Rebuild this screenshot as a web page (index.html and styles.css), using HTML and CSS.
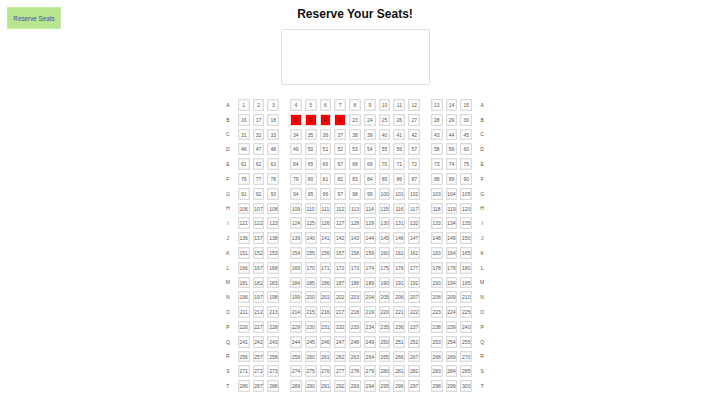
FILE: index.html
```html
<!DOCTYPE html>
<html lang="en">
<head>
    <meta charset="UTF-8">
    <title>Reserve Your Seats</title>
    <link rel="stylesheet" href="styles.css">
</head>
<body>
    <button class="reserve-btn">Reserve Seats</button>
    <div class="page">
        <h2>Reserve Your Seats!</h2>
        <div class="screen"></div>
        <div class="seats" id="seats"></div>
    </div>
    <script src="seats.js"></script>
</body>
</html>
```
FILE: styles.css
```css
body {
    font-family: "Liberation Sans", Arial, sans-serif;
    margin: 0;
    height: 400px;
    overflow: hidden;
    background-color: #ffffff;
    color: #333;
}
.reserve-btn {
    position: absolute;
    top: 7px;
    left: 7px;
    width: 54px;
    height: 22px;
    padding: 0;
    background-color: #b8e68e;
    border: 1px solid #c6eca4;
    color: #3a4fb0;
    font-family: inherit;
    font-size: 6.3px;
    font-weight: normal;
}
.page {
    display: flex;
    flex-direction: column;
    align-items: center;
}
h2 {
    margin: 7px 0 7px;
    font-size: 12px;
    line-height: 15px;
    color: #111;
}
.screen {
    box-sizing: border-box;
    width: 149px;
    height: 56px;
    border: 1px solid #e0e0e0;
    border-radius: 2px;
    margin-bottom: 14px;
}
.seats {
    display: flex;
    flex-direction: column;
    gap: 3px;
}
.row {
    display: flex;
    align-items: center;
    height: 11.8px;
    gap: 3px;
}
.row-label {
    width: 14px;
    font-size: 5px;
    text-align: center;
    color: #555;
}
.seat {
    box-sizing: border-box;
    width: 11.8px;
    height: 11.8px;
    border: 1px solid #dcdcdc;
    box-shadow: inset 0 0 0 1px #f2f2f2;
    font-size: 5px;
    line-height: 10px;
    text-align: center;
    color: #555;
}
.seat.reserved {
    background-color: #ff0000;
    box-shadow: none;
    color: #700;
}
.aisle {
    width: 4.7px;
}
```
FILE: seats.js
```js
let rows = 'ABCDEFGHIJKLMNOPQRST'.split('');
let reserved = [19, 20, 21, 22];
let seats = document.getElementById('seats');
let num = 1;

function label(letter) {
    let span = document.createElement('span');
    span.className = 'row-label';
    span.innerText = letter;
    return span;
}

rows.forEach(letter => {
    let row = document.createElement('div');
    row.className = 'row';
    row.appendChild(label(letter));
    for (let i = 1; i <= 15; i++) {
        let seat = document.createElement('div');
        seat.className = 'seat';
        if (reserved.includes(num)) {
            seat.className += ' reserved';
            seat.innerText = 'R';
        } else {
            seat.innerText = num;
        }
        row.appendChild(seat);
        num++;
        if (i === 3 || i === 12) {
            let aisle = document.createElement('div');
            aisle.className = 'aisle';
            row.appendChild(aisle);
        }
    }
    row.appendChild(label(letter));
    seats.appendChild(row);
});
```
